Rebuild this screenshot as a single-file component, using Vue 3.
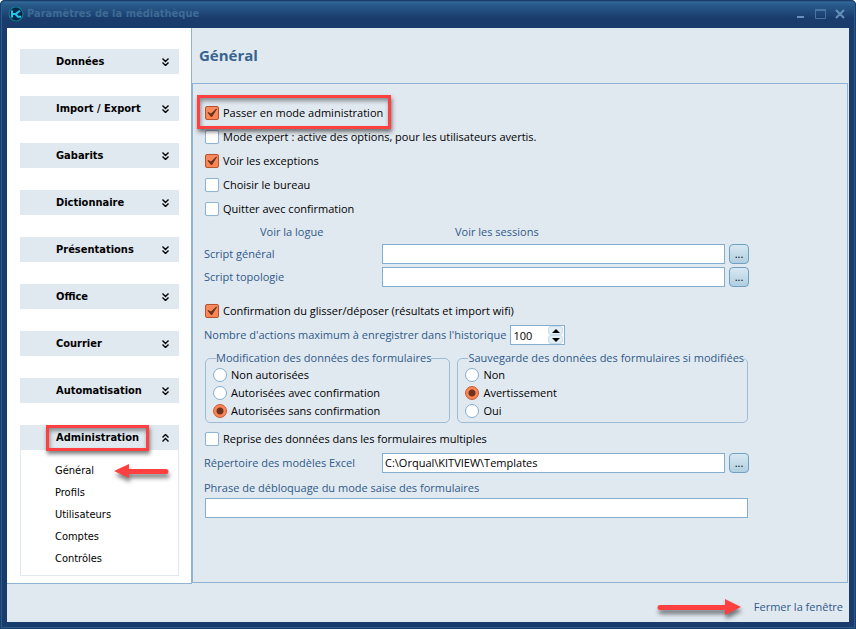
<template>
  <div class="window">
    <header class="titlebar">
      <svg class="logo" viewBox="0 0 16 16" width="16" height="16">
        <circle cx="8" cy="8" r="7" fill="#04284a" stroke="#0e7d8c" stroke-width="1.2" />
        <path d="M4 4.500v7M4 8H7.500L12 4.800M7.500 8l2.500 2.800H13" fill="none" stroke="#22c8ea" stroke-width="2" />
      </svg>
      <h1>Paramètres de la médiathèque</h1>
      <div class="controls">
        <button type="button" aria-label="Réduire">
          <svg viewBox="0 0 12 12" width="12" height="12"><path d="M2 9h7" stroke="#6592bb" stroke-width="2" /></svg>
        </button>
        <button type="button" aria-label="Agrandir">
          <svg viewBox="0 0 12 12" width="12" height="12"><path d="M0.500 2v8.500h10V2" fill="none" stroke="#47759f" /><path d="M0 2h11" stroke="#47759f" stroke-width="2" /></svg>
        </button>
        <button type="button" aria-label="Fermer">
          <svg viewBox="0 0 12 12" width="12" height="12"><path d="M1 2l8 8M9 2l-8 8" stroke="#6592bb" stroke-width="2" /></svg>
        </button>
      </div>
    </header>

    <div class="body">
      <nav class="sidebar">
        <section v-for="menu in menus" :key="menu.title" class="group">
          <button type="button" class="group-title" :class="{ open: menu.items }">
            <span class="name">
              {{ menu.title }}
              <span v-if="menu.items" class="frame menu-frame"></span>
            </span>
            <svg class="chevron" viewBox="0 0 7 8" width="7" height="8">
              <path d="M0.500 0.500l3 3l3-3M0.500 4.500l3 3l3-3" fill="none" stroke="#000" stroke-width="1.4" />
            </svg>
          </button>
          <ul v-if="menu.items">
            <li v-for="item in menu.items" :key="item">
              <a href="#">{{ item }}</a>
              <svg v-if="item === 'Général'" class="arrow menu-arrow" viewBox="0 0 56 16" width="56" height="16">
                <path d="M0 8L15 1V6H52a2 2 0 0 1 0 5H15V15z" fill="#ff4040" />
              </svg>
            </li>
          </ul>
        </section>
      </nav>

      <main>
        <h2>Général</h2>
        <form class="panel" @submit.prevent>
          <label v-for="(option, i) in options" :key="option.label" class="check">
            <span class="box">
              <input v-model="option.on" type="checkbox">
              <svg viewBox="0 0 14 14"><path d="M3 6.500L6 8L11.500 3L6.500 11z" /></svg>
            </span>
            {{ option.label }}
            <span v-if="i === 0" class="frame option-frame"></span>
          </label>

          <div class="links">
            <a href="#">Voir la logue</a>
            <a href="#">Voir les sessions</a>
          </div>

          <div class="field">
            <label for="script-general">Script général</label>
            <input id="script-general" v-model="scriptGeneral" type="text">
            <button type="button" class="browse">...</button>
          </div>
          <div class="field">
            <label for="script-topologie">Script topologie</label>
            <input id="script-topologie" v-model="scriptTopologie" type="text">
            <button type="button" class="browse">...</button>
          </div>

          <label class="check drag">
            <span class="box">
              <input v-model="confirmDrag" type="checkbox">
              <svg viewBox="0 0 14 14"><path d="M3 6.500L6 8L11.500 3L6.500 11z" /></svg>
            </span>
            Confirmation du glisser/déposer (résultats et import wifi)
          </label>

          <div class="history">
            <label for="history">Nombre d'actions maximum à enregistrer dans l'historique</label>
            <div class="spinner">
              <input id="history" v-model.number="history" type="text">
              <div class="steps">
                <button type="button" aria-label="Augmenter" @click="history++">
                  <svg viewBox="0 0 8 4" width="8" height="4"><path d="M0 4L4 0l4 4z" /></svg>
                </button>
                <button type="button" aria-label="Diminuer" @click="history--">
                  <svg viewBox="0 0 8 4" width="8" height="4"><path d="M0 0l4 4l4-4z" /></svg>
                </button>
              </div>
            </div>
          </div>

          <div class="groups">
            <fieldset v-for="group in radios" :key="group.name" :class="group.name">
              <legend>{{ group.title }}</legend>
              <label v-for="choice in group.choices" :key="choice" class="radio">
                <input v-model="group.value" type="radio" :name="group.name" :value="choice">
                {{ choice }}
              </label>
            </fieldset>
          </div>

          <label class="check">
            <span class="box">
              <input v-model="reuse" type="checkbox">
              <svg viewBox="0 0 14 14"><path d="M3 6.500L6 8L11.500 3L6.500 11z" /></svg>
            </span>
            Reprise des données dans les formulaires multiples
          </label>

          <div class="field">
            <label for="templates">Répertoire des modèles Excel</label>
            <input id="templates" v-model="templates" type="text">
            <button type="button" class="browse">...</button>
          </div>

          <div class="phrase">
            <label for="phrase">Phrase de débloquage du mode saise des formulaires</label>
            <input id="phrase" v-model="phrase" type="text">
          </div>
        </form>
      </main>
    </div>

    <footer>
      <svg class="arrow" viewBox="0 0 84 16" width="84" height="16">
        <path d="M84 8L68 0V6H3a2 2 0 0 0 0 5H68V16z" fill="#ff4040" />
      </svg>
      <a href="#">Fermer la fenêtre</a>
    </footer>
  </div>
</template>

<script setup>
import { ref } from 'vue';

const menus = [
  { title: 'Données' },
  { title: 'Import / Export' },
  { title: 'Gabarits' },
  { title: 'Dictionnaire' },
  { title: 'Présentations' },
  { title: 'Office' },
  { title: 'Courrier' },
  { title: 'Automatisation' },
  { title: 'Administration', items: ['Général', 'Profils', 'Utilisateurs', 'Comptes', 'Contrôles'] },
];

const options = ref([
  { label: 'Passer en mode administration', on: true },
  { label: 'Mode expert : active des options, pour les utilisateurs avertis.', on: false },
  { label: 'Voir les exceptions', on: true },
  { label: 'Choisir le bureau', on: false },
  { label: 'Quitter avec confirmation', on: false },
]);

const radios = ref([
  {
    name: 'modification',
    title: 'Modification des données des formulaires',
    choices: ['Non autorisées', 'Autorisées avec confirmation', 'Autorisées sans confirmation'],
    value: 'Autorisées sans confirmation',
  },
  {
    name: 'sauvegarde',
    title: 'Sauvegarde des données des formulaires si modifiées',
    choices: ['Non', 'Avertissement', 'Oui'],
    value: 'Avertissement',
  },
]);

const scriptGeneral = ref('');
const scriptTopologie = ref('');
const confirmDrag = ref(true);
const history = ref(100);
const reuse = ref(false);
const templates = ref('C:\\Orqual\\KITVIEW\\Templates');
const phrase = ref('');
</script>

<style>
body {
  margin: 0;
  background: white;
}
</style>

<style scoped>
* {
  box-sizing: border-box;
}

.window {
  display: flex;
  flex-direction: column;
  min-height: 100vh;
  padding: 0 7px 7px;
  border-radius: 5px 5px 0 0;
  background: linear-gradient(#4277a5 0, #285c8c 4px, #234f80 10px, #1a3c6d 18px);
  box-shadow: inset 0 0 0 1px #1b3e6b, inset 0 0 0 2px #285c8f;
  font: 11px/16px "Open Sans", "Noto Sans", sans-serif;
  color: black;
}

a {
  color: #2f5a88;
  text-decoration: none;
}

button,
input {
  margin: 0;
  padding: 0;
  font: inherit;
  color: inherit;
}

.titlebar {
  display: flex;
  align-items: center;
  gap: 3px;
  height: 28px;
}

.logo {
  margin-left: 1px;
}

.titlebar h1 {
  margin: 0;
  font: bold 11px/16px "DejaVu Sans Condensed", "DejaVu Sans", sans-serif;
  color: #3d6c95;
}

.controls {
  display: flex;
  gap: 8px;
  margin-left: auto;
  margin-right: 2px;
}

.controls button {
  display: flex;
  border: 0;
  background: none;
}

.body {
  display: flex;
  flex: 1;
  background: #e1e9f0;
}

.sidebar {
  display: flex;
  flex-direction: column;
  gap: 22px;
  width: 185px;
  padding: 21px 12px 7px 13px;
  background: white;
  border-right: 1px solid #8fb3d1;
  border-bottom: 1px solid #8fb3d1;
  font-family: "DejaVu Sans Condensed", "DejaVu Sans", sans-serif;
}

.group-title {
  display: flex;
  align-items: center;
  justify-content: space-between;
  width: 100%;
  height: 25px;
  padding: 1px 10px 0 36px;
  border: 0;
  background: #e1e9f0;
  font-weight: bold;
}

.name {
  position: relative;
}

.open .chevron {
  transform: rotate(180deg);
}

.group ul {
  margin: 0;
  padding: 10px 0 5px;
  list-style: none;
  border: 1px solid #e1e9f0;
  border-top: 0;
}

.group li {
  position: relative;
  height: 22px;
  padding-left: 34px;
  line-height: 22px;
}

.group li a {
  color: black;
}

/* red callouts laid over the content */
.frame {
  position: absolute;
  border: 3px solid #ff4040;
  box-shadow: 1px 3px 4px rgba(0, 0, 0, 0.5), inset 1px 3px 4px rgba(0, 0, 0, 0.4);
  pointer-events: none;
  z-index: 1;
}

.menu-frame {
  inset: -5px -10px -5px -10px;
}

.option-frame {
  inset: -6px -8px -4px -7px;
}

.arrow {
  filter: drop-shadow(1px 4px 2px rgba(0, 0, 0, 0.5));
}

.menu-arrow {
  position: absolute;
  left: 93px;
  top: 3px;
}

main {
  display: flex;
  flex-direction: column;
  flex: 1;
}

h2 {
  height: 55px;
  margin: 0;
  padding-left: 7px;
  font-size: 15px;
  line-height: 55px;
  color: #38638f;
}

.panel {
  display: flex;
  flex-direction: column;
  align-items: stretch;
  flex: 1;
  margin-right: 1px;
  margin-bottom: 1px;
  padding: 17px 98px 24px 11px;
  border: 1px solid #8fb3d1;
}

.check {
  position: relative;
  display: flex;
  align-items: center;
  align-self: flex-start;
  gap: 4px;
  height: 24px;
  padding-left: 1px;
}

.box {
  display: grid;
  width: 14px;
  height: 14px;
}

.box > * {
  grid-area: 1 / 1;
}

.box input {
  appearance: none;
  border: 1px solid #8fb5d3;
  border-radius: 2px;
  background: white;
  box-shadow: 0 0 1px #a8c6dc;
}

.box svg {
  display: none;
  fill: #6b3420;
  stroke: #6b3420;
  pointer-events: none;
}

.box input:checked {
  border-color: #b8532c;
  background: linear-gradient(#f58a60, #ff8450);
}

.box input:checked + svg {
  display: block;
}

.links {
  display: flex;
  height: 21px;
  padding-left: 56px;
  line-height: 22px;
}

.links a {
  width: 195px;
}

.field {
  display: flex;
  align-items: center;
  height: 23px;
}

.field label,
.history label,
.phrase label,
legend {
  color: #2f5a88;
}

.field label {
  width: 178px;
}

input[type="text"] {
  height: 20px;
  border: 1px solid #83aed0;
  background: white;
}

.field input {
  flex: 1;
  min-width: 0;
  padding-left: 2px;
}

.browse {
  width: 20px;
  height: 20px;
  margin-left: 4px;
  border: 1px solid #6fa0c2;
  border-radius: 4px;
  background: linear-gradient(#d8e8f2, #b0cfe0);
  line-height: 18px;
}

.drag {
  margin-top: 11px;
}

.history {
  display: flex;
  align-items: center;
  gap: 4px;
  height: 24px;
}

.spinner {
  display: flex;
  width: 55px;
  height: 20px;
  border: 1px solid #83aed0;
  background: white;
}

.spinner input[type="text"] {
  flex: 1;
  min-width: 0;
  height: 18px;
  padding-left: 2px;
  border: 0;
}

.steps {
  display: flex;
  flex-direction: column;
  width: 15px;
  margin-right: 1px;
}

.steps button {
  display: flex;
  flex: 1;
  align-items: center;
  justify-content: center;
  border: 1px solid #c9dce9;
  border-radius: 3px;
  background: #e4eef5;
}

.groups {
  display: flex;
  gap: 7px;
  margin: 3px 1px 4px;
}

fieldset {
  flex: 244 1 0;
  min-width: 0;
  height: 73px;
  margin: 0;
  padding: 0 7px;
  border: 1px solid #9dbdd6;
  border-radius: 5px;
}

fieldset.sauvegarde {
  flex-grow: 292;
}

legend {
  margin-left: 3px;
  padding: 0;
  line-height: 16px;
  white-space: nowrap;
}

.radio {
  display: flex;
  align-items: center;
  gap: 4px;
  height: 18px;
}

.radio input {
  appearance: none;
  width: 14px;
  height: 14px;
  border: 1px solid #83aed0;
  border-radius: 50%;
  background: white;
}

.radio input:checked {
  border-color: #c75a30;
  background: radial-gradient(circle, #6b3420 3px, #ff8455 4px);
}

.phrase {
  display: flex;
  flex-direction: column;
  padding-top: 4px;
}

.phrase label {
  line-height: 20px;
}

.phrase input {
  margin: 0 1px;
}

footer {
  display: flex;
  align-items: center;
  justify-content: flex-end;
  gap: 13px;
  height: 38px;
  padding: 8px 6px 0 0;
  background: #e1e9f0;
}
</style>
